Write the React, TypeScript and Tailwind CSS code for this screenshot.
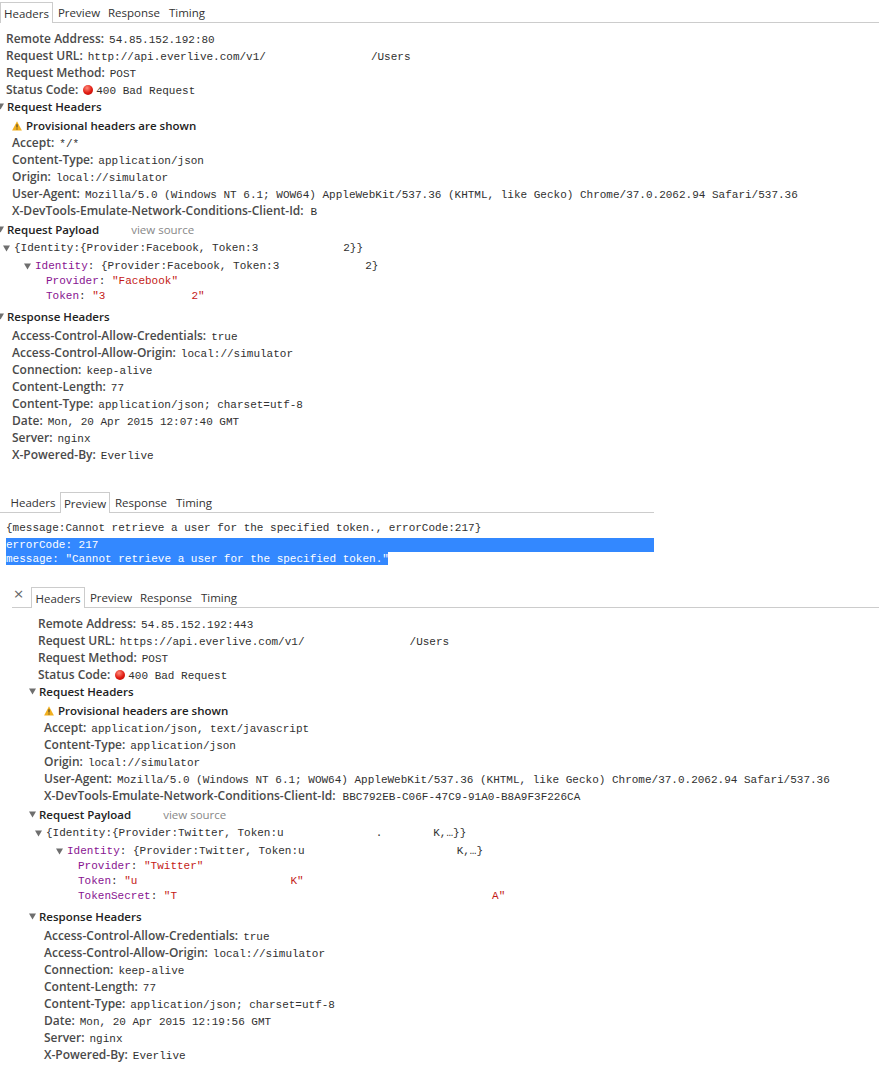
import type { ReactNode } from "react";

const mono = "font-['Liberation_Mono','DejaVu_Sans_Mono',monospace] text-[11px] font-normal text-[#303030]";
const selected = "font-['Liberation_Mono','DejaVu_Sans_Mono',monospace] text-[11px] text-white";

type Tab = { label: string; width: number; ml?: number };

const tabsOf = (first: number, second: number, responseMl = 0): Tab[] => [
  { label: "Headers", width: first },
  { label: "Preview", width: second },
  { label: "Response", width: 58, ml: responseMl },
  { label: "Timing", width: 48 },
];

function Arrow({ className = "" }: { className?: string }) {
  return (
    <svg className={`shrink-0 ${className}`} width="7" height="7" viewBox="0 0 7 7">
      <path d="M0 0.5H7L3.5 6.5Z" fill="#6e6e6e" />
    </svg>
  );
}

function Gap({ w }: { w: number }) {
  return <span className="inline-block" style={{ width: w }} />;
}

function TabBar({
  tabs,
  active,
  className,
  lead,
}: {
  tabs: Tab[];
  active: string;
  className: string;
  lead?: ReactNode;
}) {
  return (
    <div className={`flex h-[21px] items-end border-b border-[#cccccc] ${className}`}>
      {lead}
      {tabs.map((tab) => (
        <div
          key={tab.label}
          style={{ width: tab.width, marginLeft: tab.ml }}
          className={
            tab.label === active
              ? "relative -mb-px flex h-[21px] shrink-0 items-center justify-center border border-b-0 border-[#cccccc] bg-white pt-[2px] text-[#333]"
              : "flex h-[20px] shrink-0 items-center justify-center pt-[2px] text-[#333]"
          }
        >
          {tab.label}
        </div>
      ))}
    </div>
  );
}

function Field({ label, children, gap = 5 }: { label: string; children: ReactNode; gap?: number }) {
  return (
    <div className="flex h-[17px] items-baseline whitespace-nowrap text-[12px] leading-[17px]">
      <span className="font-semibold text-[#4a4a4a]" style={{ marginRight: gap }}>
        {label}
      </span>
      <span className={mono}>{children}</span>
    </div>
  );
}

function SectionTitle({ children, extra }: { children: ReactNode; extra?: number }) {
  return (
    <div className="-ml-[9px] flex h-[17px] items-center whitespace-nowrap font-semibold text-[#222]">
      <Arrow className="mr-[3px]" />
      <span>{children}</span>
      {extra !== undefined && (
        <span className="font-normal text-[#888]" style={{ marginLeft: extra }}>
          view source
        </span>
      )}
    </div>
  );
}

function StatusDot() {
  return (
    <span className="mr-[3px] inline-block size-[10px] rounded-full bg-[radial-gradient(circle_at_40%_30%,#ff8a7a,#e01a10_55%,#a80d08)] align-[-1px]" />
  );
}

function WarningRow() {
  return (
    <div className="mt-[2px] flex h-[17px] items-center whitespace-nowrap font-semibold text-[#222]">
      <svg className="mr-[4px]" width="10" height="10" viewBox="0 0 10 10">
        <path d="M5 0.3L9.9 9.6H0.1Z" fill="#f2b01e" />
        <path d="M4.5 3.2H5.5V6.6H4.5ZM4.5 7.4H5.5V8.4H4.5Z" fill="#333" />
      </svg>
      Provisional headers are shown
    </div>
  );
}

function Key({ children }: { children: ReactNode }) {
  return <span className="text-[#881391]">{children}</span>;
}

function Str({ children }: { children: ReactNode }) {
  return <span className="text-[#c41a16]">{children}</span>;
}

function PayloadRows({ rows }: { rows: { indent: number; arrow?: boolean; h: number; content: ReactNode }[] }) {
  return (
    <div className="mb-[4px]">
      {rows.map((row, i) => (
        <div
          key={i}
          className={`flex items-center whitespace-pre ${mono}`}
          style={{ height: row.h, paddingLeft: row.indent }}
        >
          {row.arrow && <Arrow className="mr-[4px] -ml-[11px]" />}
          <span>{row.content}</span>
        </div>
      ))}
    </div>
  );
}

const responseRows = (date: string) => [
  ["Access-Control-Allow-Credentials:", "true"],
  ["Access-Control-Allow-Origin:", "local://simulator"],
  ["Connection:", "keep-alive"],
  ["Content-Length:", "77"],
  ["Content-Type:", "application/json; charset=utf-8"],
  ["Date:", date],
  ["Server:", "nginx"],
  ["X-Powered-By:", "Everlive"],
];

const userAgent =
  "Mozilla/5.0 (Windows NT 6.1; WOW64) AppleWebKit/537.36 (KHTML, like Gecko) Chrome/37.0.2062.94 Safari/537.36";

export default function App() {
  return (
    <div className="h-[1078px] w-[879px] overflow-hidden bg-white font-['Open_Sans','Noto_Sans',sans-serif] text-[11.5px] leading-none">
      <TabBar className="mt-[2px]" active="Headers" tabs={tabsOf(53, 52)} />

      <section className="pt-[7px] pl-[6px]">
        <Field label="Remote Address:">54.85.152.192:80</Field>
        <Field label="Request URL:">
          http://api.everlive.com/v1/
          <Gap w={105} />
          /Users
        </Field>
        <Field label="Request Method:">POST</Field>
        <Field label="Status Code:">
          <StatusDot />
          400 Bad Request
        </Field>
        <SectionTitle>Request Headers</SectionTitle>
        <div className="pl-[6px]">
          <WarningRow />
          <Field label="Accept:">*/*</Field>
          <Field label="Content-Type:">application/json</Field>
          <Field label="Origin:">local://simulator</Field>
          <Field label="User-Agent:">{userAgent}</Field>
          <Field label="X-DevTools-Emulate-Network-Conditions-Client-Id:" gap={7}>
            B
          </Field>
        </div>
        <div className="mt-[2px]">
          <SectionTitle extra={32}>Request Payload</SectionTitle>
        </div>
        <PayloadRows
          rows={[
            {
              indent: 8,
              arrow: true,
              h: 21,
              content: (
                <>
                  {"{Identity:{Provider:Facebook, Token:3"}
                  <Gap w={85} />
                  {"2}}"}
                </>
              ),
            },
            {
              indent: 29,
              arrow: true,
              h: 15,
              content: (
                <>
                  <Key>Identity</Key>
                  {": {Provider:Facebook, Token:3"}
                  <Gap w={86} />
                  {"2}"}
                </>
              ),
            },
            {
              indent: 40,
              h: 15,
              content: (
                <>
                  <Key>Provider</Key>: <Str>"Facebook"</Str>
                </>
              ),
            },
            {
              indent: 40,
              h: 15,
              content: (
                <>
                  <Key>Token</Key>: <Str>"3</Str>
                  <Gap w={86} />
                  <Str>2"</Str>
                </>
              ),
            },
          ]}
        />
        <SectionTitle>Response Headers</SectionTitle>
        <div className="mt-[2px] pl-[6px]">
          {responseRows("Mon, 20 Apr 2015 12:07:40 GMT").map(([label, value]) => (
            <Field key={label} label={label}>
              {value}
            </Field>
          ))}
        </div>
      </section>

      <TabBar className="mt-[29px] w-[654px] pl-[6px]" active="Preview" tabs={tabsOf(54, 50, 2)} />
      <section className="w-[654px] pl-[6px]">
        <div className={`mt-[6px] flex h-[19px] items-center whitespace-pre ${mono}`}>
          {"{message:Cannot retrieve a user for the specified token., errorCode:217}"}
        </div>
        <div className={`flex h-[14px] items-center whitespace-pre bg-[#3388ff] ${selected}`}>errorCode: 217</div>
        <div className={`flex h-[13px] w-[382px] items-center whitespace-pre bg-[#3388ff] pt-px ${selected}`}>
          message: "Cannot retrieve a user for the specified token."
        </div>
      </section>

      <TabBar
        className="mt-[22px] ml-[12px]"
        active="Headers"
        lead={
          <span className="mr-[6px] flex h-[20px] w-[13px] shrink-0 items-center justify-center pb-[8px] text-[17px] text-[#666]">
            ×
          </span>
        }
        tabs={tabsOf(54, 52)}
      />

      <section className="pt-[7px] pl-[38px]">
        <Field label="Remote Address:">54.85.152.192:443</Field>
        <Field label="Request URL:">
          https://api.everlive.com/v1/
          <Gap w={105} />
          /Users
        </Field>
        <Field label="Request Method:">POST</Field>
        <Field label="Status Code:">
          <StatusDot />
          400 Bad Request
        </Field>
        <SectionTitle>Request Headers</SectionTitle>
        <div className="pl-[6px]">
          <WarningRow />
          <Field label="Accept:">application/json, text/javascript</Field>
          <Field label="Content-Type:">application/json</Field>
          <Field label="Origin:">local://simulator</Field>
          <Field label="User-Agent:">{userAgent}</Field>
          <Field label="X-DevTools-Emulate-Network-Conditions-Client-Id:" gap={7}>
            BBC792EB-C06F-47C9-91A0-B8A9F3F226CA
          </Field>
        </div>
        <div className="mt-[2px]">
          <SectionTitle extra={32}>Request Payload</SectionTitle>
        </div>
        <PayloadRows
          rows={[
            {
              indent: 8,
              arrow: true,
              h: 21,
              content: (
                <>
                  {"{Identity:{Provider:Twitter, Token:u"}
                  <Gap w={92} />.
                  <Gap w={51} />
                  {"K,…}}"}
                </>
              ),
            },
            {
              indent: 29,
              arrow: true,
              h: 15,
              content: (
                <>
                  <Key>Identity</Key>
                  {": {Provider:Twitter, Token:u"}
                  <Gap w={152} />
                  {"K,…}"}
                </>
              ),
            },
            {
              indent: 40,
              h: 15,
              content: (
                <>
                  <Key>Provider</Key>: <Str>"Twitter"</Str>
                </>
              ),
            },
            {
              indent: 40,
              h: 15,
              content: (
                <>
                  <Key>Token</Key>: <Str>"u</Str>
                  <Gap w={153} />
                  <Str>K"</Str>
                </>
              ),
            },
            {
              indent: 40,
              h: 15,
              content: (
                <>
                  <Key>TokenSecret</Key>: <Str>"T</Str>
                  <Gap w={315} />
                  <Str>A"</Str>
                </>
              ),
            },
          ]}
        />
        <SectionTitle>Response Headers</SectionTitle>
        <div className="mt-[2px] pl-[6px]">
          {responseRows("Mon, 20 Apr 2015 12:19:56 GMT").map(([label, value]) => (
            <Field key={label} label={label}>
              {value}
            </Field>
          ))}
        </div>
      </section>
    </div>
  );
}
